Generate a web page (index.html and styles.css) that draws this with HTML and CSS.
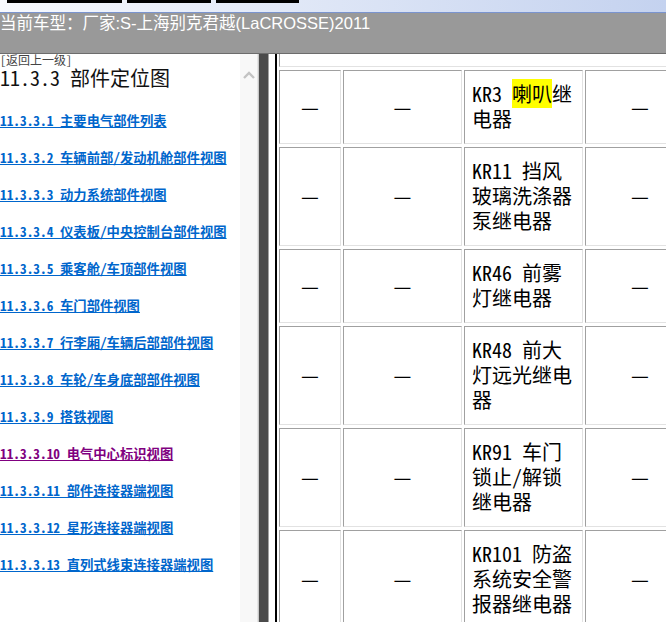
FILE: index.html
```html
<!DOCTYPE html>
<html lang="zh-CN">
<head>
    <meta charset="UTF-8">
    <title>部件定位图</title>
    <link rel="stylesheet" href="styles.css">
</head>
<body>
<div class="topbar">
    <span class="tab1"></span>
    <span class="tab2"></span>
    <span class="tab3"></span>
</div>
<div class="title">当前车型：厂家:S-上海别克君越(LaCROSSE)2011</div>

<div class="frames">
    <div class="nav">
        <div class="back">[返回上一级]</div>
        <h1 class="heading">11.3.3 部件定位图</h1>
        <div class="links">
            <a href="#">11.3.3.1 主要电气部件列表</a>
            <a href="#">11.3.3.2 车辆前部/发动机舱部件视图</a>
            <a href="#">11.3.3.3 动力系统部件视图</a>
            <a href="#">11.3.3.4 仪表板/中央控制台部件视图</a>
            <a href="#">11.3.3.5 乘客舱/车顶部件视图</a>
            <a href="#">11.3.3.6 车门部件视图</a>
            <a href="#">11.3.3.7 行李厢/车辆后部部件视图</a>
            <a href="#">11.3.3.8 车轮/车身底部部件视图</a>
            <a href="#">11.3.3.9 搭铁视图</a>
            <a href="#" class="visited">11.3.3.10 电气中心标识视图</a>
            <a href="#">11.3.3.11 部件连接器端视图</a>
            <a href="#">11.3.3.12 星形连接器端视图</a>
            <a href="#">11.3.3.13 直列式线束连接器端视图</a>
        </div>
    </div>
    <div class="scroll">
        <svg class="arrow" width="12" height="8" viewBox="0 0 12 8">
            <path d="M1 7 L6 2 L11 7" fill="none" stroke="#c3c3c3" stroke-width="2.4"/>
        </svg>
    </div>
    <div class="divider"></div>

    <div class="main">
        <table class="parts">
            <colgroup>
                <col class="c1">
                <col class="c2">
                <col class="c3">
                <col class="c4">
            </colgroup>
            <tr class="head">
                <td colspan="4"><div class="spacer"></div></td>
            </tr>
            <tr>
                <td>—</td>
                <td>—</td>
                <td class="name">KR3 <span class="hl">喇叭</span>继电器</td>
                <td>—</td>
            </tr>
            <tr>
                <td>—</td>
                <td>—</td>
                <td class="name">KR11 挡风玻璃洗涤器泵继电器</td>
                <td>—</td>
            </tr>
            <tr>
                <td>—</td>
                <td>—</td>
                <td class="name">KR46 前雾灯继电器</td>
                <td>—</td>
            </tr>
            <tr>
                <td>—</td>
                <td>—</td>
                <td class="name">KR48 前大灯远光继电器</td>
                <td>—</td>
            </tr>
            <tr>
                <td>—</td>
                <td>—</td>
                <td class="name">KR91 车门锁止/解锁继电器</td>
                <td>—</td>
            </tr>
            <tr>
                <td>—</td>
                <td>—</td>
                <td class="name">KR101 防盗系统安全警报器继电器</td>
                <td>—</td>
            </tr>
        </table>
    </div>
</div>
</body>
</html>
```

FILE: styles.css
```css
body {
    margin: 0;
    height: 622px;
    overflow: hidden;
    background-color: #fff;
    font-family: "Noto Sans Mono CJK SC", "Noto Sans CJK SC", sans-serif;
}

/* faixa azul do topo com as abas pretas */
.topbar {
    display: flex;
    gap: 5px;
    height: 12px;
    padding-left: 7px;
    background: linear-gradient(to right, #f7f9fd, #c4d2ef);
    border-bottom: 1px solid #7a94cf;
}

.topbar span {
    height: 3px;
    background-color: #000;
}

.tab1 { width: 115px; }
.tab2 { width: 84px; }
.tab3 { width: 83px; }

.title {
    height: 40px;
    background-color: #999;
    border-bottom: 1px solid #6c6c6c;
    color: #fff;
    font-family: "Liberation Sans", "Noto Sans CJK SC", sans-serif;
    font-size: 16.5px;
    line-height: 20px;
    white-space: nowrap;
}

.frames {
    display: flex;
    height: 568px;
}

/* menu da esquerda */
.nav {
    width: 240px;
    overflow: hidden;
    background-color: #fff;
}

.back {
    margin-top: -1px;
    font-size: 12px;
    line-height: 13px;
    color: #444;
}

.heading {
    margin: 0;
    font-size: 20px;
    line-height: 24px;
    font-weight: normal;
    color: #111;
}

.links {
    padding-top: 23px;
}

.links a {
    display: block;
    width: max-content;
    margin-bottom: 21px;
    font-size: 13.33px;
    line-height: 16px;
    font-weight: bold;
    color: #0066cc;
    white-space: nowrap;
}

.links a.visited {
    color: #800080;
}

.scroll {
    width: 17px;
    background-color: #f8f8f8;
    border-right: 1px solid #e6e6e6;
    text-align: center;
}

.arrow {
    display: block;
    margin: 17px auto 0;
}

.divider {
    width: 9px;
    background-color: #4b4b4b;
    border-left: 1px solid #c8c8c8;
    border-right: 1px solid #a3a3a3;
}

/* tabela da direita */
.main {
    flex: 1;
    overflow: hidden;
    padding-left: 6px;
}

.parts {
    width: 422px;
    margin-top: -30px;
    border-collapse: separate;
    border-spacing: 2px 3px;
    table-layout: fixed;
    border-left: 2px solid #000;
    font-size: 20px;
    line-height: 25px;
    color: #000;
}

.c1 { width: 62px; }
.c2 { width: 119px; }
.c3 { width: 119px; }
.c4 { width: 110px; }

.parts td {
    padding: 10px 7px 12px;
    border: 1px solid;
    border-color: #a0a0a0 #e2e2e2 #e2e2e2 #a0a0a0;
    text-align: center;
    vertical-align: middle;
}

.parts .head td {
    padding: 0;
}

.spacer {
    height: 38px;
}

.parts td.name {
    text-align: left;
}

.hl {
    background-color: #ff0;
}
```
